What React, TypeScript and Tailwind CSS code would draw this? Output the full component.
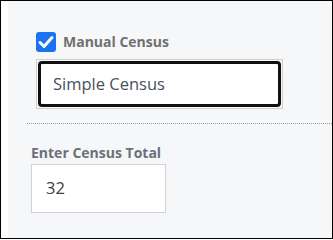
import React from "react";

const font = { fontFamily: '"Open Sans", "Noto Sans", Arial, sans-serif' };

const CheckIcon = () => (
  <svg viewBox="0 0 20 20" className="h-5 w-5">
    <path d="M4 10.5 L8 14.5 L16 5.5" fill="none" stroke="white" strokeWidth="3" strokeLinecap="round" strokeLinejoin="round" />
  </svg>
);

export default function App() {
  return (
    <div className="flex h-[239px] w-[333px] border border-black bg-white" style={font}>
      <div className="w-[7px] shrink-0 bg-white" />
      <div className="flex flex-1 flex-col bg-[#f6f7f9]">
        {/* manual census */}
        <div className="pl-[28px] pt-[31px]">
          <label className="flex items-center gap-[7px]">
            <span className="flex h-5 w-5 items-center justify-center rounded-[3px] bg-[#1a73f0]">
              <CheckIcon />
            </span>
            <span className="text-[14px] font-bold leading-5 text-[#707070]">Manual Census</span>
          </label>
          <div className="mt-[7px] h-[50px] w-[247px] border border-[#cfcfcf] p-px">
            <div className="flex h-full items-center rounded-[4px] border-[3px] border-[#111] bg-white pl-[12px] text-[16.5px] text-[#48515d]">
              Simple Census
            </div>
          </div>
        </div>

        <div className="ml-[19px] mt-[14px] border-t border-dotted border-[#9a9a9a]" />

        {/* census total */}
        <div className="pl-[23px] pt-[19px]">
          <div className="text-[14px] font-bold leading-[19px] text-[#6b7079]">Enter Census Total</div>
          <div className="mt-[2px] flex h-[49px] w-[135px] items-center border border-[#cfd3d8] bg-white pl-[14px] text-[16.5px] text-[#3a3f46]">
            32
          </div>
        </div>
      </div>
    </div>
  );
}
